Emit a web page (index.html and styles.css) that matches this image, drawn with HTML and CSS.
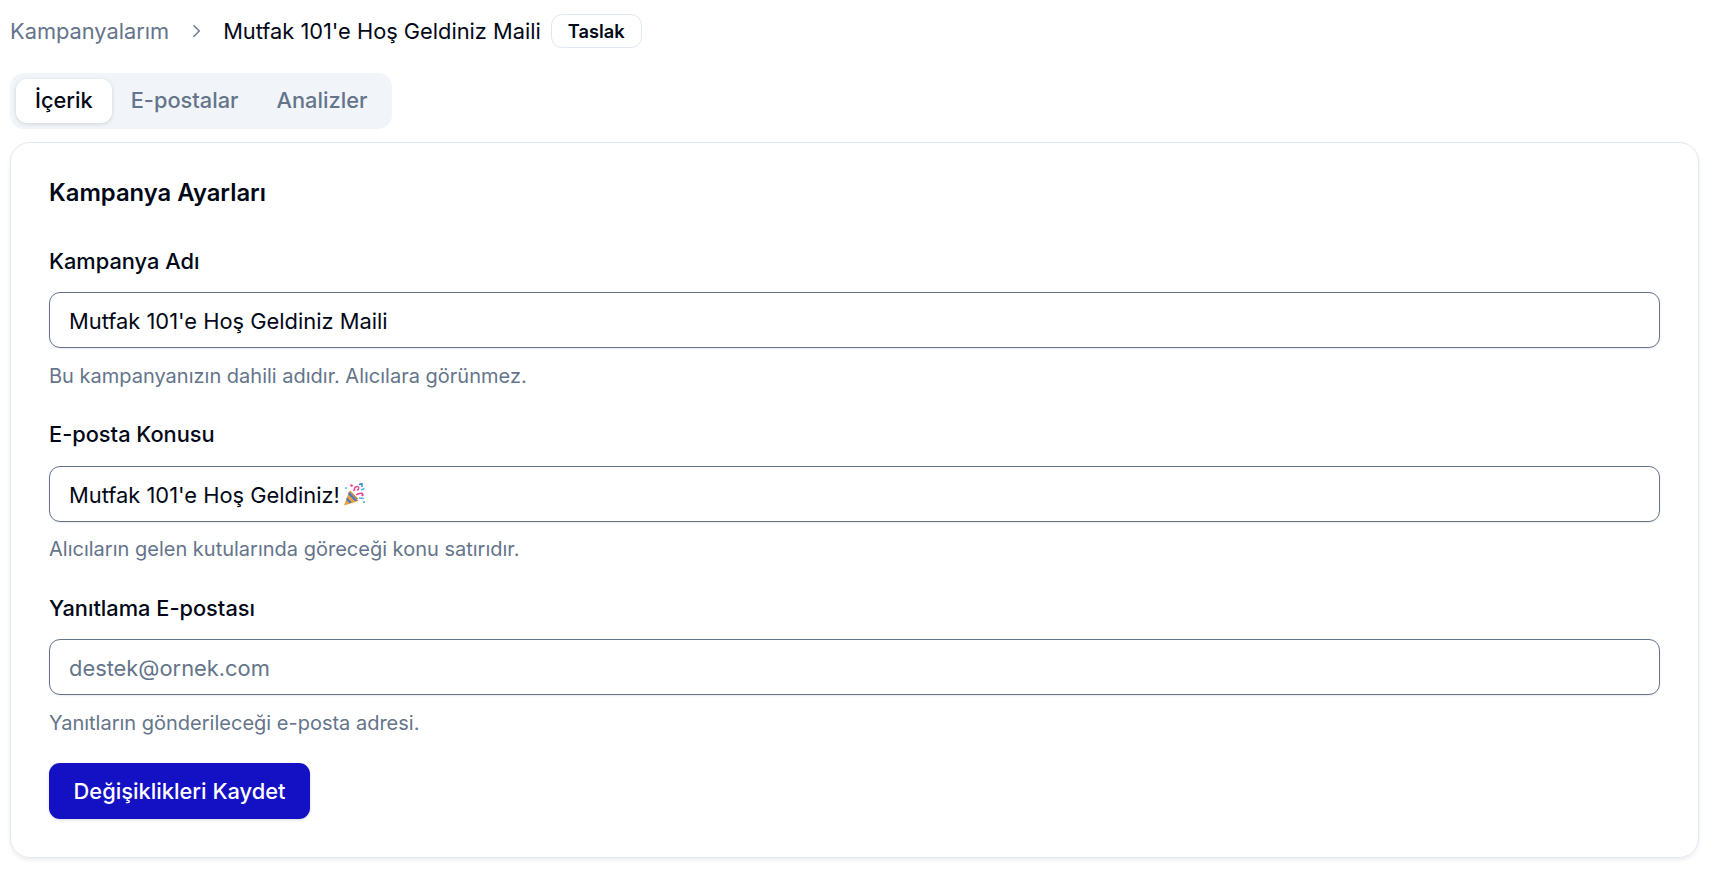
FILE: index.html
```html
<!DOCTYPE html>
<html lang="tr">
<head>
<meta charset="utf-8">
<title>Kampanya Ayarları</title>
<link rel="stylesheet" href="styles.css">
</head>
<body>
<main class="page">
  <nav class="crumbs">
    <span class="crumb-link">Kampanyalarım</span>
    <svg class="chevron" viewBox="0 0 24 24" aria-hidden="true"><path d="M9 5l7 7-7 7"/></svg>
    <span class="crumb-current">Mutfak 101'e Hoş Geldiniz Maili</span>
    <span class="badge">Taslak</span>
  </nav>
  <div class="tabs">
    <span class="tab tab-active">İçerik</span>
    <span class="tab">E-postalar</span>
    <span class="tab">Analizler</span>
  </div>
  <section class="card">
    <h2 class="card-title">Kampanya Ayarları</h2>
    <div class="field">
      <label class="label">Kampanya Adı</label>
      <div class="input">Mutfak 101'e Hoş Geldiniz Maili</div>
      <p class="hint">Bu kampanyanızın dahili adıdır. Alıcılara görünmez.</p>
    </div>
    <div class="field">
      <label class="label">E-posta Konusu</label>
      <div class="input input-emoji">Mutfak 101'e Hoş Geldiniz!<svg class="emoji" viewBox="0 0 24 24" aria-hidden="true">
        <path d="M2 22.5l5-14 9.500 9.500z" fill="#e9a23b"/>
        <path d="M5 14.500l4.800 4.800-2.200.9-3.400-3.400zM7.100 8.800l8.400 8.400-2.400 1-7-7z" fill="#4a78c8"/>
        <path d="M8 7.500l8.500 8.500-1.500.5-7.500-7.500z" fill="#c9802a"/>
        <circle cx="9.500" cy="2.500" r="1.300" fill="#ec3f9a"/><circle cx="20.500" cy="12" r="1.200" fill="#ec3f9a"/>
        <circle cx="22" cy="19" r="1.100" fill="#4fb6e8"/><circle cx="4" cy="5" r="1" fill="#4fb6e8"/>
        <path d="M11.500 8c1.500-1 .5-2.500 1.500-3.500s2-.5 2.500-1.500" fill="none" stroke="#ec3f9a" stroke-width="1.600"/>
        <path d="M14 12c2-1.500 4-2 7-1.500M15.500 7.500c1-1 1.500-2.500 1-4" fill="none" stroke="#ec3f9a" stroke-width="1.500"/>
        <path d="M17 1.500l3-1v3.500" fill="none" stroke="#3a8fdc" stroke-width="1.500"/>
        <path d="M17 15l5 .5M19 7l3.500-1.500" fill="none" stroke="#4fb6e8" stroke-width="1.500"/>
      </svg></div>
      <p class="hint">Alıcıların gelen kutularında göreceği konu satırıdır.</p>
    </div>
    <div class="field">
      <label class="label">Yanıtlama E-postası</label>
      <div class="input input-placeholder">destek@ornek.com</div>
      <p class="hint">Yanıtların gönderileceği e-posta adresi.</p>
    </div>
    <button class="save" type="button">Değişiklikleri Kaydet</button>
  </section>
</main>
</body>
</html>
```
FILE: styles.css
```css
* { box-sizing: border-box; }
html, body { margin: 0; background: #fff; }
body {
  font-family: Inter, "Liberation Sans", sans-serif;
  color: #020817;
  font-size: 20px;
}
.page {
  padding: 14px 18px 14px 10px;
  height: 873px;
  overflow: hidden;
}
.crumbs {
  display: flex;
  align-items: center;
  height: 34px;
  margin-bottom: 25px;
  font-size: 21.8px;
}
.crumb-link { color: #64748b; }
.chevron {
  width: 20px;
  height: 20px;
  margin: 0 17px;
  fill: none;
  stroke: #64748b;
  stroke-width: 1.6;
}
.crumb-current { margin-right: 10px; }
.badge {
  font-size: 18.3px;
  font-weight: 600;
  border: 1px solid #e2e8f0;
  border-radius: 11px;
  padding: 5px 16px;
  line-height: 22px;
}
.tabs {
  display: inline-flex;
  padding: 6px;
  border-radius: 14px;
  background: #f1f5f9;
  height: 56px;
  margin-bottom: 13px;
  vertical-align: top;
}
.tab {
  display: flex;
  align-items: center;
  padding: 0 19px 3px;
  font-size: 21.8px;
  font-weight: 500;
  color: #64748b;
  border-radius: 11px;
}
.tab-active {
  background: #fff;
  color: #020817;
  box-shadow: 0 1px 4px rgba(0,0,0,.14);
}
.card {
  border: 1.5px solid #e2e8f0;
  border-radius: 20px;
  padding: 34px 38px 38px;
  box-shadow: 0 2px 4px rgba(0,0,0,.08);
  height: 716px;
}
.card-title {
  margin: 0 0 37.5px;
  font-size: 23.8px;
  line-height: 32px;
  font-weight: 600;
}
.field { margin-bottom: 30.5px; }
.field:last-of-type { margin-bottom: 26px; }
.label {
  display: block;
  font-size: 21.8px;
  font-weight: 500;
  line-height: 28px;
  margin-bottom: 17.5px;
}
.input {
  display: flex;
  align-items: center;
  height: 56px;
  padding: 1px 19px 0;
  border: 1px solid #64748b;
  border-radius: 11px;
  font-size: 21.87px;
  box-shadow: 0 1px 2px rgba(0,0,0,.08);
}
.input-emoji { padding-top: 3px; }
.input-placeholder { color: #64748b; }
.emoji { width: 24px; height: 24px; margin-left: 2px; }
.hint {
  margin: 13.5px 0 0;
  font-size: 20px;
  line-height: 28px;
  color: #64748b;
}
.save {
  display: block;
  height: 56px;
  width: 261px;
  border: 0;
  border-radius: 11px;
  background: #1410c4;
  color: #fff;
  font: 500 21.87px Inter, sans-serif;
  box-shadow: 0 1px 3px rgba(0,0,0,.15);
}
```
